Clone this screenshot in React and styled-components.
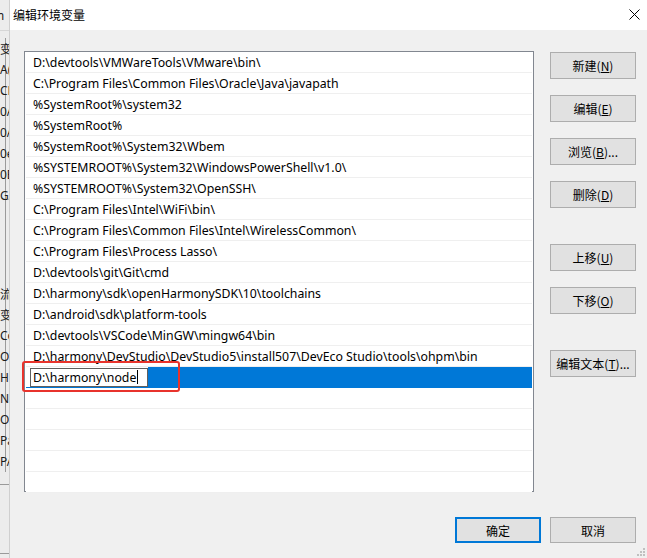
import React from 'react';
import styled, { createGlobalStyle } from 'styled-components';

const GlobalStyle = createGlobalStyle`
  html, body {
    margin: 0;
    padding: 0;
    background: #f0f0f0;
  }
  body {
    font-family: "Noto Sans", "Noto Sans CJK SC", sans-serif;
    font-size: 12px;
    color: #000;
  }
`;

const Frame = styled.div`
  position: relative;
  display: flex;
  width: 647px;
  height: 558px;
  overflow: hidden;
`;

const BackStrip = styled.div`
  width: 9px;
  flex: none;
  display: flex;
  flex-direction: column;
  background: #ececec;
  border-right: 1px solid #cfcfcf;
  overflow: hidden;
`;

const BackTitle = styled.div`
  height: 30px;
  display: flex;
  align-items: center;
  border-bottom: 1px solid #d6d6d6;
  margin-bottom: 7px;
`;

const BackList = styled.div`
  display: flex;
  flex-direction: column;
  border-left: 1px solid #9a9a9a;
  margin-left: 5px;
`;

const BackGap = styled.div`
  height: ${p => p.h}px;
`;

const Frag = styled.div`
  height: 21px;
  display: flex;
  align-items: center;
  margin-left: ${p => p.shift || -6}px;
  white-space: nowrap;
  font-size: 12px;
  color: #1a1a1a;
`;

const BackBottom = styled.div`
  margin-top: 12px;
  border-top: 1px solid #9a9a9a;
  height: 68px;
  border-bottom: 1px solid #9a9a9a;
`;

const Dialog = styled.div`
  flex: 1;
  display: flex;
  flex-direction: column;
  background: #f0f0f0;
`;

const TitleBar = styled.div`
  height: 30px;
  background: #fff;
  display: flex;
  align-items: center;
  justify-content: space-between;
  padding: 0 7px 2px 3px;
  box-sizing: border-box;
`;

const Title = styled.span`
  font-family: "Noto Sans CJK SC", sans-serif;
  font-size: 12px;
`;

const Body = styled.div`
  flex: 1;
  display: flex;
  flex-direction: column;
  padding: 21px 11px 0 14px;
`;

const Main = styled.div`
  display: flex;
  gap: 16px;
`;

const ListBox = styled.div`
  width: 510px;
  height: 441px;
  box-sizing: border-box;
  border: 1px solid #828790;
  background: #fff;
  display: flex;
  flex-direction: column;
  padding: 0 1px;
`;

const Row = styled.div`
  position: ${p => (p.selected ? 'relative' : 'static')};
  height: 21px;
  flex: none;
  box-sizing: border-box;
  border-bottom: 1px solid ${p => (p.selected ? '#0078d7' : '#efefef')};
  background: ${p => (p.selected ? '#0078d7' : '#fff')};
  display: flex;
  align-items: center;
  padding-left: ${p => (p.selected ? 0 : 7)}px;
  white-space: nowrap;
  font-size: 12.3px;
`;

const EditPad = styled.div`
  height: 20px;
  background: #fff;
  padding-left: 4px;
  display: flex;
  align-items: center;
`;

const EditBox = styled.div`
  width: 118px;
  height: 19px;
  box-sizing: border-box;
  border: 1px solid #5f5f5f;
  background: #fff;
  display: flex;
  align-items: center;
  padding-left: 2px;
`;

const Caret = styled.span`
  display: inline-block;
  width: 1px;
  height: 14px;
  background: #000;
  margin-left: 1px;
`;

const Highlight = styled.div`
  position: absolute;
  z-index: 2;
  left: -4px;
  top: -6px;
  width: 158px;
  height: 31px;
  box-sizing: border-box;
  border: 2px solid #e8332c;
  border-radius: 3px;
  pointer-events: none;
`;

const Side = styled.div`
  display: flex;
  flex-direction: column;
  gap: 36px;
  padding-top: 1px;
`;

const Group = styled.div`
  display: flex;
  flex-direction: column;
  gap: 16px;
`;

const Button = styled.button`
  width: 86px;
  height: ${p => p.h || 27}px;
  box-sizing: border-box;
  margin: 0;
  padding: 0;
  background: #e1e1e1;
  border: ${p => (p.primary ? '2px solid #0078d7' : '1px solid #adadad')};
  font-family: "Noto Sans CJK SC", sans-serif;
  font-size: 12px;
  color: #000;
  display: flex;
  align-items: center;
  justify-content: center;

  u {
    text-underline-offset: 1px;
  }
`;

const Footer = styled.div`
  display: flex;
  justify-content: flex-end;
  gap: 9px;
  margin-top: 25px;
`;

const Grip = styled.svg`
  position: absolute;
  right: 2px;
  bottom: 2px;
`;

const paths = [
  'D:\\devtools\\VMWareTools\\VMware\\bin\\',
  'C:\\Program Files\\Common Files\\Oracle\\Java\\javapath',
  '%SystemRoot%\\system32',
  '%SystemRoot%',
  '%SystemRoot%\\System32\\Wbem',
  '%SYSTEMROOT%\\System32\\WindowsPowerShell\\v1.0\\',
  '%SYSTEMROOT%\\System32\\OpenSSH\\',
  'C:\\Program Files\\Intel\\WiFi\\bin\\',
  'C:\\Program Files\\Common Files\\Intel\\WirelessCommon\\',
  'C:\\Program Files\\Process Lasso\\',
  'D:\\devtools\\git\\Git\\cmd',
  'D:\\harmony\\sdk\\openHarmonySDK\\10\\toolchains',
  'D:\\android\\sdk\\platform-tools',
  'D:\\devtools\\VSCode\\MinGW\\mingw64\\bin',
  'D:\\harmony\\DevStudio\\DevStudio5\\install507\\DevEco Studio\\tools\\ohpm\\bin',
];

const topFrags = ['变', 'A(', 'CL', '0A', '0A', '0e', '0E', 'GA'];
const bottomFrags = ['流', '变', 'Co', 'Or', 'HD', 'NI', 'OS', 'Pa', 'PA'];

const sideGroups = [
  [['新建', 'N', ''], ['编辑', 'E', ''], ['浏览', 'B', '...'], ['删除', 'D', '']],
  [['上移', 'U', ''], ['下移', 'O', '']],
  [['编辑文本', 'T', '...']],
];

const CloseIcon = () => (
  <svg width="11" height="11" viewBox="0 0 11 11">
    <path d="M0.5 0.5 L10.5 10.5 M10.5 0.5 L0.5 10.5" stroke="#000" strokeWidth="1" />
  </svg>
);

export default function App() {
  return (
    <>
      <GlobalStyle />
      <Frame>
        <BackStrip>
          <BackTitle>
            <Frag shift={-7}>m</Frag>
          </BackTitle>
          <BackList>
            {topFrags.map((f, i) => (
              <Frag key={i}>{f}</Frag>
            ))}
            <BackGap h={77} />
            {bottomFrags.map((f, i) => (
              <Frag key={i}>{f}</Frag>
            ))}
          </BackList>
          <BackBottom />
        </BackStrip>

        <Dialog>
          <TitleBar>
            <Title>编辑环境变量</Title>
            <CloseIcon />
          </TitleBar>

          <Body>
            <Main>
              <ListBox>
                {paths.map(p => (
                  <Row key={p}>{p}</Row>
                ))}
                <Row selected>
                  <EditPad>
                    <EditBox>
                      D:\harmony\node
                      <Caret />
                    </EditBox>
                  </EditPad>
                  <Highlight />
                </Row>
                {[0, 1, 2, 3, 4].map(i => (
                  <Row key={'e' + i} />
                ))}
              </ListBox>

              <Side>
                {sideGroups.map((g, gi) => (
                  <Group key={gi}>
                    {g.map(([label, key, tail]) => (
                      <Button key={label}>
                        {label}(<u>{key}</u>){tail}
                      </Button>
                    ))}
                  </Group>
                ))}
              </Side>
            </Main>

            <Footer>
              <Button primary h={26}>确定</Button>
              <Button h={26}>取消</Button>
            </Footer>
          </Body>
        </Dialog>

        <Grip width="8" height="8" viewBox="0 0 8 8">
          {[[6, 0], [6, 3], [3, 3], [6, 6], [3, 6], [0, 6]].map(([x, y]) => (
            <rect key={x + '-' + y} x={x} y={y} width="2" height="2" fill="#c0c0c0" />
          ))}
        </Grip>
      </Frame>
    </>
  );
}
